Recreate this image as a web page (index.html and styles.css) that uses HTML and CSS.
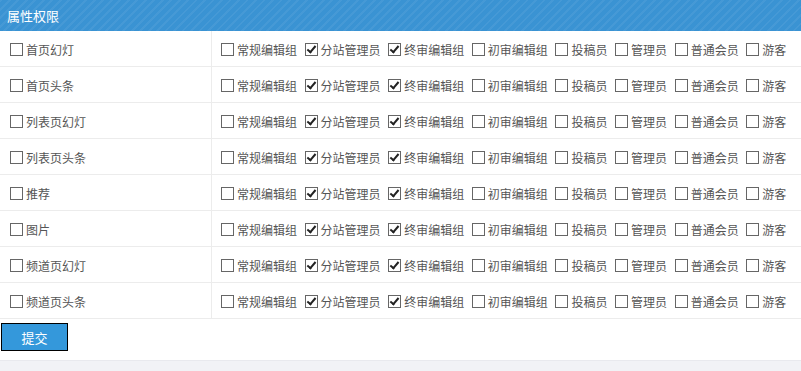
FILE: index.html
```html
<!DOCTYPE html>
<html>
    <head>
        <meta charset="UTF-8">
        <title>属性权限</title>
        <link rel="stylesheet" href="styles.css">
    </head>
    <body>
        <div class="panel">
            <div class="panel-head">属性权限</div>
            <table class="perm-table">
                <tbody id="rows"></tbody>
            </table>
            <div class="panel-foot">
                <button class="submit-btn">提交</button>
            </div>
        </div>
        <div class="page-bottom"></div>
        <script>
            var attrs = ['首页幻灯', '首页头条', '列表页幻灯', '列表页头条', '推荐', '图片', '频道页幻灯', '频道页头条'];
            var groups = ['常规编辑组', '分站管理员', '终审编辑组', '初审编辑组', '投稿员', '管理员', '普通会员', '游客'];
            var checked = ['分站管理员', '终审编辑组'];

            var box = function (label, on) {
                return '<label class="check"><span class="box' + (on ? ' on' : '') + '"></span>' + label + '</label>';
            };

            var html = '';
            attrs.forEach(function (attr) {
                html += '<tr><td class="attr-cell">' + box(attr, false) + '</td><td class="group-cell"><div class="group-list">';
                groups.forEach(function (g) {
                    html += box(g, checked.indexOf(g) > -1);
                });
                html += '</div></td></tr>';
            });
            document.getElementById('rows').innerHTML = html;
        </script>
    </body>
</html>
```

FILE: styles.css
```css
html, body {
    margin: 0;
    background-color: #f1f2f6;
    font-family: "Noto Sans CJK SC", "Liberation Sans", sans-serif;
    font-size: 12px;
    color: #555;
}

.panel {
    background-color: white;
}

.panel-head {
    height: 31px;
    line-height: 31px;
    padding-left: 7px;
    color: white;
    font-size: 13px;
    background-color: #3a93d3;
    background-image: repeating-linear-gradient(135deg, rgba(255, 255, 255, 0.06) 0, rgba(255, 255, 255, 0.06) 2px, transparent 2px, transparent 6px);
}

.perm-table {
    width: 100%;
    border-collapse: collapse;
}

.perm-table td {
    height: 35px;
    padding: 0;
    border-bottom: 1px solid #ececec;
}

.attr-cell {
    width: 201px;
    padding-left: 10px !important;
    border-right: 1px solid #ececec;
}

.group-cell {
    padding-left: 9px !important;
}

.group-list {
    display: flex;
    gap: 7.6px;
}

.check {
    display: flex;
    align-items: center;
    white-space: nowrap;
    padding-top: 1px;
}

.box {
    width: 11px;
    height: 11px;
    border: 1px solid #666;
    margin-right: 3px;
    position: relative;
    flex-shrink: 0;
}

.box.on::after {
    content: "";
    position: absolute;
    left: 3px;
    top: 0;
    width: 3px;
    height: 7px;
    border-right: 2px solid #222;
    border-bottom: 2px solid #222;
    transform: rotate(40deg);
}

.panel-foot {
    height: 37px;
    padding-top: 4px;
    padding-left: 1px;
}

.submit-btn {
    width: 67px;
    height: 28px;
    border: 1px solid #000;
    background-color: #3498db;
    color: white;
    font-family: inherit;
    font-size: 13px;
    padding: 0;
}

.page-bottom {
    height: 14px;
    border-top: 1px solid #e8e9ee;
}
```
